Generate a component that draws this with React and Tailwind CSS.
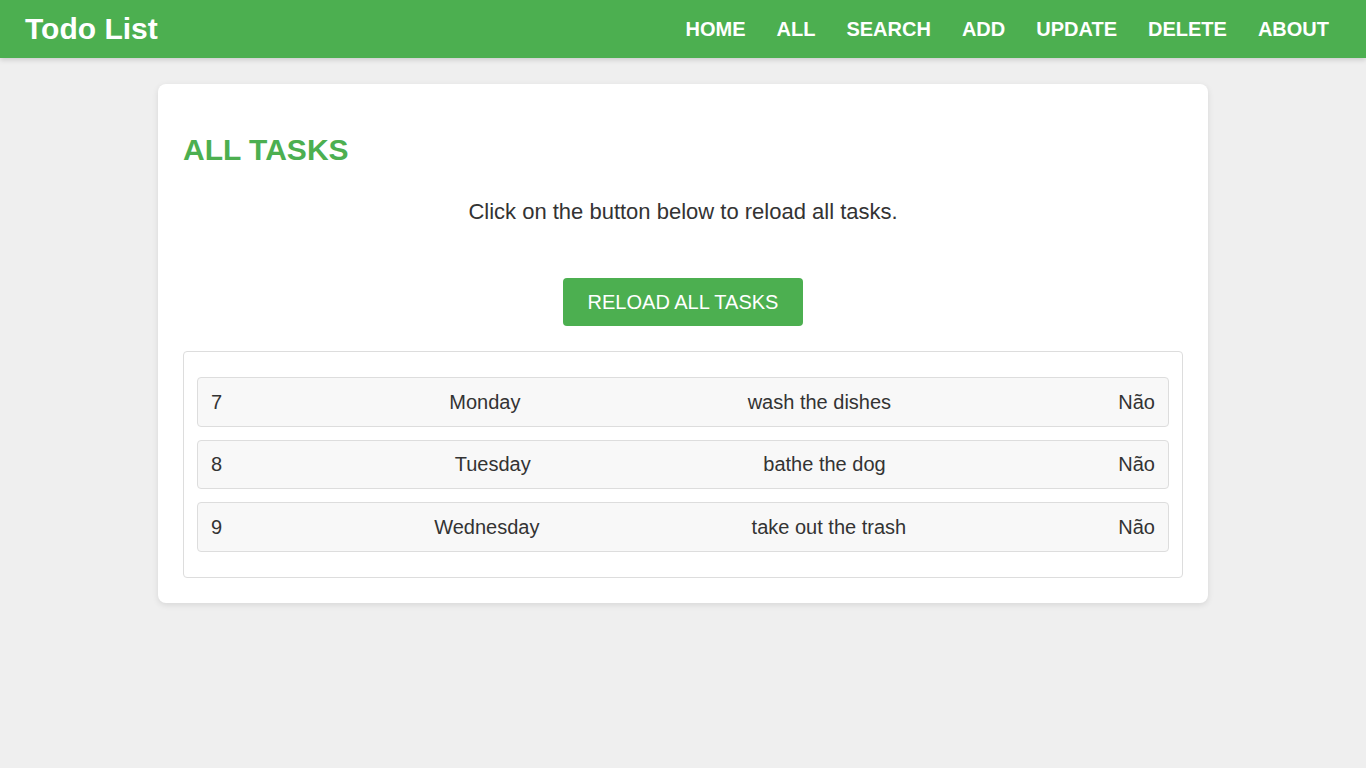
import React from "react";

const tasks = [
  { id: 7, day: "Monday", desc: "wash the dishes", done: "Não" },
  { id: 8, day: "Tuesday", desc: "bathe the dog", done: "Não" },
  { id: 9, day: "Wednesday", desc: "take out the trash", done: "Não" },
];

const nav = ["HOME", "ALL", "SEARCH", "ADD", "UPDATE", "DELETE", "ABOUT"];

export default function App() {
  return (
    <div
      className="min-h-[768px] bg-[#efefef] text-[#333]"
      style={{ fontFamily: '"Liberation Sans", Arial, sans-serif' }}
    >
      <header className="h-[58px] bg-[#4caf50] flex items-center justify-between pl-[25px] pr-[37px] shadow-[0_2px_5px_rgba(0,0,0,0.15)] relative">
        <h1 className="text-[30px] font-bold text-white leading-none">Todo List</h1>
        <nav className="flex items-center gap-[31px]">
          {nav.map((n) => (
            <a key={n} className="text-[20px] font-bold text-white leading-none">
              {n}
            </a>
          ))}
        </nav>
      </header>

      <main className="flex justify-center pt-[26px]">
        <div className="w-[1050px] bg-white rounded-[8px] shadow-[0_2px_6px_rgba(0,0,0,0.1)] p-[25px] flex flex-col">
          <h2 className="mt-[24px] text-[30px] leading-[34px] font-bold text-[#4caf50]">ALL TASKS</h2>
          <p className="mt-[31.5px] text-[22px] leading-[25px] text-center text-[#333]">
            Click on the button below to reload all tasks.
          </p>
          <div className="mt-[54.5px] flex justify-center">
            <button className="w-[240px] h-[48px] bg-[#4caf50] text-white text-[20px] rounded-[4px] flex items-center justify-center">
              RELOAD ALL TASKS
            </button>
          </div>
          <div className="mt-[25px] border border-[#ddd] rounded-[4px] px-[13px] pt-[25px] pb-[25px] flex flex-col gap-[13px]">
            {tasks.map((t) => (
              <div
                key={t.id}
                className="h-[49.5px] bg-[#f8f8f8] border border-[#ddd] rounded-[4px] px-[13px] flex items-center justify-between text-[20px] text-[#333]"
              >
                <span>{t.id}</span>
                <span>{t.day}</span>
                <span>{t.desc}</span>
                <span>{t.done}</span>
              </div>
            ))}
          </div>
        </div>
      </main>
    </div>
  );
}
